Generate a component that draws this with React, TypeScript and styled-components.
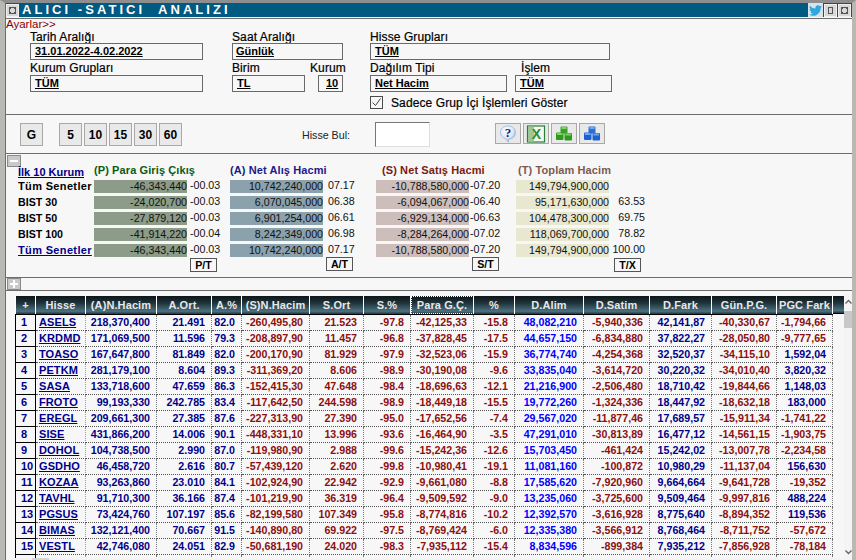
import React from 'react';
import styled, { createGlobalStyle } from 'styled-components';
import { FaTwitter } from 'react-icons/fa';

const Global = createGlobalStyle`
  html, body { margin: 0; padding: 0; background: #f7f7f7; }
  body { width: 856px; height: 560px; overflow: hidden; font-family: "Liberation Sans", Arial, sans-serif; font-size: 10.667px; color: #000; }
`;

const Frame = styled.div`
  width: 856px; height: 560px; box-sizing: border-box; overflow: hidden;
  background: #f7f7f7; border-top: 3px solid #8e8e8e; border-left: 5px solid #b8b9b3; border-right: 4px solid #b8b9b3;
  display: flex; flex-direction: column;
`;
const Inner = styled.div`
  flex: 1; min-height: 0; border-left: 1px solid #6c6c6c; display: flex; flex-direction: column;
`;
const TitleBar = styled.div`
  height: 14px; flex: none; background: #005a82; display: flex; align-items: center; position: relative;
  border-bottom: 1px solid #f7f7f7; box-sizing: content-box;
`;
const WinBtn = styled.div`
  width: 13px; height: 13px; background: #d8d8d8; border: 1px solid #f0f0f0; box-sizing: border-box;
  display: flex; align-items: center; justify-content: center; flex: none; margin-right: 1px;
`;
const TitleText = styled.div`
  margin-left: 2px; color: #fff; font-weight: bold; font-size: 13px; letter-spacing: 3.05px; white-space: pre; line-height: 14px;
`;
const TitleRight = styled.div`
  margin-left: auto; display: flex; align-items: center;
`;
const TwitterBox = styled.div`
  width: 15px; height: 14px; background: #d9e3ea; display: flex; align-items: center; justify-content: center; color: #32a6dc; margin-right: 1px;
`;
const Section = styled.div<{ $h: number }>`
  height: ${p => p.$h}px; flex: none; border-top: 1px solid #6e6e6e; box-sizing: content-box; position: relative;
`;
const Settings = styled.div`
  height: 95px; flex: none; border-top: 1px solid #6e6e6e;
`;
const AyarLink = styled.div`
  color: #8b0000; font-size: 11.5px; line-height: 11px; height: 10px;
`;
const FormGrid = styled.div`
  display: grid;
  grid-template-columns: 173px 29px 73px 13px 25px 27px 137px 8px 97px;
  grid-template-rows: 14px 17px 15px 17px 4px 13px;
  margin-left: 24px;
`;
const Label = styled.div<{ $col: string; $row: number; $dx?: number }>`
  grid-column: ${p => p.$col}; grid-row: ${p => p.$row};
  font-size: 12px; font-weight: 500; line-height: 17px; height: 14px; white-space: nowrap; padding-left: ${p => p.$dx ?? 0}px; letter-spacing: .1px;
  -webkit-text-stroke: .2px #000;
`;
const Field = styled.div<{ $col: string; $row: number; $pl?: number; $wide?: boolean }>`
  grid-column: ${p => p.$col}; grid-row: ${p => p.$row};
  border: 1px solid #6a6a6a; box-sizing: border-box; height: 17px; padding-left: ${p => p.$pl ?? 4}px;
  font-weight: bold; font-size: 11px; line-height: 14px; text-decoration: underline; white-space: nowrap; overflow: hidden;
  ${p => p.$wide ? 'width: 240px;' : ''}
`;
const CheckRow = styled.div`
  grid-column: 7 / 10; grid-row: 6; display: flex; align-items: center; gap: 8px; white-space: nowrap;
  font-weight: 500; font-size: 12px; letter-spacing: .1px; -webkit-text-stroke: .2px #000;
`;
const CheckBox = styled.div`
  width: 13px; height: 13px; border: 1px solid #4a4a4a; box-sizing: border-box; background: #f7f7f7; display: flex; align-items: center; justify-content: center; flex: none;
`;
const Toolbar = styled.div`
  flex: none; border-top: 1px solid #6e6e6e; display: flex; align-items: flex-start; padding: 8px 0 0 14px; box-sizing: content-box; height: 30px;
`;
const PeriodBtn = styled.div<{ $ml?: number }>`
  width: 23px; height: 23px; box-sizing: border-box; background: #e9e9e9; border: 1px solid #a8a8a8; margin-left: ${p => p.$ml ?? 0}px; margin-right: 2px;
  display: flex; align-items: center; justify-content: center; font-weight: bold; font-size: 12px; flex: none;
`;
const FindLabel = styled.div`
  margin-left: 118px; width: 73px; line-height: 24px; font-size: 10.667px; color: #222; flex: none;
`;
const FindInput = styled.div`
  width: 55px; height: 25px; margin-top: -1px; box-sizing: border-box; background: #fff; border: 1px solid #777; border-right-color: #ddd; border-bottom-color: #ddd; flex: none;
`;
const IconBtn = styled.div<{ $ml?: number }>`
  width: 26px; height: 21px; box-sizing: border-box; background: #e9e9e9; border: 1px solid #a8a8a8; margin-left: ${p => p.$ml ?? 0}px; margin-right: 2px;
  display: flex; align-items: center; justify-content: center; flex: none;
`;
const Summary = styled.div`
  height: 123px; flex: none; border-top: 1px solid #6e6e6e; position: relative; display: flex; flex-direction: column;
`;
const Toggle = styled.div<{ $mt: number }>`
  width: 14px; height: 12px; margin: ${p => p.$mt}px 0 0 1px; background: #c9c9c9; border: 1px solid #8a8a8a; box-sizing: border-box;
  display: flex; align-items: center; justify-content: center; color: #fff; flex: none;
`;
const SumHead = styled.div`
  display: flex; height: 14px; margin-top: -4px; margin-bottom: 3px; align-items: center; white-space: nowrap;
`;
const SumHeadLink = styled.div`
  margin-left: 12px; width: 76px; color: #00008b; font-weight: bold; font-size: 11px; text-decoration: underline; line-height: 14px; padding-top: 4px; height: 14px;
`;
const SumTitle = styled.div<{ $c: string; $w: number }>`
  width: ${p => p.$w}px; color: ${p => p.$c}; font-size: 11px; font-weight: bold; line-height: 14px; flex: none; letter-spacing: .1px;
`;
const SumRow = styled.div`
  display: flex; height: 13px; margin-bottom: 3px; align-items: stretch; white-space: nowrap; line-height: 13px;
`;
const SumName = styled.div<{ $link?: boolean; $wide?: boolean }>`
  margin-left: 12px; width: 76px; flex: none; font-weight: bold; font-size: ${p => p.$wide ? '11px' : '10.667px'}; letter-spacing: ${p => p.$wide ? '.35px' : '0'};
  color: ${p => p.$link ? '#00008b' : '#000'}; text-decoration: ${p => p.$link ? 'underline' : 'none'};
`;
const Bar = styled.div<{ $bg: string }>`
  width: 93px; background: ${p => p.$bg}; text-align: right; flex: none; font-size: 10.667px; color: #111;
`;
const Pct = styled.div<{ $w: number; $pl?: number; $align?: string }>`
  width: ${p => p.$w}px; flex: none; padding-left: ${p => p.$pl ?? 0}px; box-sizing: border-box; font-size: 10.667px; color: #111; text-align: ${p => p.$align ?? 'left'}; margin-top: -1px;
`;
const TotalTag = styled.div<{ $x: number; $y: number }>`
  position: absolute; left: ${p => p.$x}px; top: ${p => p.$y}px; width: 27px; height: 14px; box-sizing: border-box; border: 1px solid #555; font-weight: bold; font-size: 10.667px;
  display: flex; align-items: center; justify-content: center; background: #f7f7f7;
`;
const TableWrap = styled.div`
  flex: 1; min-height: 0; border-top: 1px solid #6e6e6e; display: flex; padding: 5px 0 0 9px; position: relative; overflow: hidden;
`;
const Table = styled.table`
  border-collapse: collapse; table-layout: fixed; width: 817px; flex: none; align-self: flex-start; white-space: nowrap;
`;
const headGradient = 'linear-gradient(#0c1519 0%, #1f343b 40%, #4c7180 85%, #22363e 100%)';
const Th = styled.th<{ $focus?: boolean }>`
  height: 18px; padding: 0; box-sizing: border-box; color: #e8e8e8; font-size: 11px; font-weight: bold; letter-spacing: .1px; text-align: center;
  background: ${headGradient};
  border-right: 1px solid #fff; border-left: 1px solid #fff; border-bottom: 1px solid #000; overflow: hidden;
  ${p => p.$focus ? 'outline: 1px dotted #fff; outline-offset: -1px;' : ''}
`;
const Td = styled.td<{ $c?: string }>`
  height: 16px; padding: 0 6px 0 0; box-sizing: border-box; text-align: right; font-weight: bold; font-size: 10.667px;
  color: ${p => p.$c ?? '#00008b'}; border-bottom: 1px dotted #555; border-right: 1px dotted #777; overflow: hidden; line-height: 14px;
`;
const NumCell = styled.td`
  height: 16px; padding: 0 0 0 5px; box-sizing: border-box; text-align: left; font-weight: bold; font-size: 11px; color: #00008b;
  border: 1px solid #000; border-top: 0;
`;
const StockCell = styled.td`
  height: 16px; padding: 0 0 0 3px; box-sizing: border-box; text-align: left; font-weight: bold; font-size: 11px; color: #00008b; text-decoration: underline; letter-spacing: .1px;
  border-bottom: 1px dotted #555; border-right: 1px dotted #6aa5d8; overflow: hidden;
`;
const HeadFill = styled.div`
  width: 11px; height: 18px; flex: none; background: ${headGradient}; border-bottom: 1px solid #000; box-sizing: border-box;
`;
const Scrollbar = styled.div`
  width: 9px; flex: none; display: flex; flex-direction: column; align-items: center; position: relative; margin-top: -2px; background: #f4f4f4;
`;
const ScrollThumb = styled.div`
  width: 9px; height: 17px; background: #c8c8c8; margin-top: 7px;
`;
const ScrollUp = styled.svg`
  margin-top: 5px; flex: none;
`;
const ScrollDown = styled.svg`
  margin-top: auto; margin-bottom: 5px; flex: none;
`;
const HScroll = styled.div`
  position: absolute; left: 9px; right: 9px; bottom: 0; height: 2px; background: #f4f4f4; padding-left: 17px;
`;
const HThumb = styled.div`
  width: 17px; height: 2px; background: #d4d4d4;
`;

const rows: string[][] = [
['ASELS','218,370,400','21.491','82.0','-260,495,80','21.523','-97.8','-42,125,33','-15.8','48,082,210','-5,940,336','42,141,87','-40,330,67','-1,794,66'],
['KRDMD','171,069,500','11.596','79.3','-208,897,90','11.457','-96.8','-37,828,45','-17.5','44,657,150','-6,834,880','37,822,27','-28,050,80','-9,777,65'],
['TOASO','167,647,800','81.849','82.0','-200,170,90','81.929','-97.9','-32,523,06','-15.9','36,774,740','-4,254,368','32,520,37','-34,115,10','1,592,04'],
['PETKM','281,179,100','8.604','89.3','-311,369,20','8.606','-98.9','-30,190,08','-9.6','33,835,040','-3,614,720','30,220,32','-34,010,40','3,820,32'],
['SASA','133,718,600','47.659','86.3','-152,415,30','47.648','-98.4','-18,696,63','-12.1','21,216,900','-2,506,480','18,710,42','-19,844,66','1,148,03'],
['FROTO','99,193,330','242.785','83.4','-117,642,50','244.598','-98.9','-18,449,18','-15.5','19,772,260','-1,324,336','18,447,92','-18,632,18','183,000'],
['EREGL','209,661,300','27.385','87.6','-227,313,90','27.390','-95.0','-17,652,56','-7.4','29,567,020','-11,877,46','17,689,57','-15,911,34','-1,741,22'],
['SISE','431,866,200','14.006','90.1','-448,331,10','13.996','-93.6','-16,464,90','-3.5','47,291,010','-30,813,89','16,477,12','-14,561,15','-1,903,75'],
['DOHOL','104,738,500','2.990','87.0','-119,980,90','2.988','-99.6','-15,242,36','-12.6','15,703,450','-461,424','15,242,02','-13,007,78','-2,234,58'],
['GSDHO','46,458,720','2.616','80.7','-57,439,120','2.620','-99.8','-10,980,41','-19.1','11,081,160','-100,872','10,980,29','-11,137,04','156,630'],
['KOZAA','93,263,860','23.010','84.1','-102,924,90','22.942','-92.9','-9,661,080','-8.8','17,585,620','-7,920,960','9,664,664','-9,641,728','-19,352'],
['TAVHL','91,710,300','36.166','87.4','-101,219,90','36.319','-96.4','-9,509,592','-9.0','13,235,060','-3,725,600','9,509,464','-9,997,816','488,224'],
['PGSUS','73,424,760','107.197','85.6','-82,199,580','107.349','-95.8','-8,774,816','-10.2','12,392,570','-3,616,928','8,775,640','-8,894,352','119,536'],
['BIMAS','132,121,400','70.667','91.5','-140,890,80','69.922','-97.5','-8,769,424','-6.0','12,335,380','-3,566,912','8,768,464','-8,711,752','-57,672'],
['VESTL','42,746,080','24.051','82.9','-50,681,190','24.020','-98.3','-7,935,112','-15.4','8,834,596','-899,384','7,935,212','-7,856,928','-78,184'],
['','','','','','','','','','','','','',''],
];
const heads = ['+','Hisse','(A)N.Hacim','A.Ort.','A.%','(S)N.Hacim','S.Ort','S.%','Para G.Ç.','%','D.Alim','D.Satim','D.Fark','Gün.P.G.','PGC Fark'];
const widths = [20,50,71,55,30,68,54,47,63,41,69,66,62,65,56];
const RED = '#8b1010', NAVY = '#00008b', BLUE = '#0000ff';
const colColor = (i: number, v: string) => {
  if (i <= 2) return NAVY;
  if (i === 8) return BLUE;
  if (i === 10) return NAVY;
  if (i === 12) return v.startsWith('-') ? RED : NAVY;
  return RED;
};
const summary = [
  ['Tüm Senetler','-46,343,440','-00.03','10,742,240,000','07.17','-10,788,580,000','-07.20','149,794,900,000',''],
  ['BIST 30','-24,020,700','-00.03','6,070,045,000','06.38','-6,094,067,000','-06.40','95,171,630,000','63.53'],
  ['BIST 50','-27,879,120','-00.03','6,901,254,000','06.61','-6,929,134,000','-06.63','104,478,300,000','69.75'],
  ['BIST 100','-41,914,220','-00.04','8,242,349,000','06.98','-8,284,264,000','-07.02','118,069,700,000','78.82'],
  ['Tüm Senetler','-46,343,440','-00.03','10,742,240,000','07.17','-10,788,580,000','-07.20','149,794,900,000','100.00'],
];

const Close = () => (
  <svg width="9" height="9" viewBox="0 0 9 9" fill="none" stroke="#555" strokeWidth="1"><rect x="1.5" y="1.5" width="6" height="6"/><path d="M1 1l2 2M8 1L6 3M1 8l2-2M8 8L6 6"/></svg>
);
const Help = () => (
  <svg width="18" height="18" viewBox="0 0 18 18"><defs><radialGradient id="hb" cx=".4" cy=".3" r=".75"><stop offset="0" stopColor="#fff"/><stop offset=".6" stopColor="#dce8f8"/><stop offset="1" stopColor="#7ea6e0"/></radialGradient></defs><path d="M9 1c4.4 0 7.5 2.8 7.5 6.5S13.4 14 9.8 14l-.3 3.2L6.4 13.6C3.4 12.8 1.5 10.5 1.5 7.5 1.5 3.8 4.6 1 9 1z" fill="url(#hb)" stroke="#8fabd4" strokeWidth=".7"/><text x="9" y="12" textAnchor="middle" fontFamily="Liberation Serif" fontWeight="bold" fontSize="13" fill="#14277f">?</text></svg>
);
const Excel = () => (
  <svg width="20" height="18" viewBox="0 0 20 18"><rect x="1.5" y="1" width="17" height="16" fill="#f4f8ee" stroke="#2d7d3a" strokeWidth="1.2"/><rect x="2" y="1.6" width="6" height="15" fill="#9ec795"/><text x="10.5" y="14" textAnchor="middle" fontFamily="Liberation Sans" fontWeight="bold" fontSize="14" fill="#2c8a35">X</text></svg>
);
const Cubes = ({ a, b, c }: { a: string; b: string; c: string }) => (
  <svg width="16" height="15" viewBox="0 0 16 15">
    <rect x="4.5" y="0.5" width="7" height="7" rx="1" fill={a}/><rect x="5.5" y="1" width="5" height="2" fill={c}/>
    <rect x="0" y="6.5" width="7.5" height="7.5" rx="1" fill={b}/><rect x="1" y="7" width="5.5" height="2" fill={c}/>
    <rect x="8.5" y="7" width="7.5" height="7.5" rx="1" fill={b}/><rect x="9.5" y="7.5" width="5.5" height="2" fill={c}/>
  </svg>
);

export default function App() {
  return (
    <>
      <Global />
      <Frame>
        <Inner>
          <TitleBar>
            <WinBtn><Close /></WinBtn>
            <TitleText>ALICI -SATICI  ANALIZI</TitleText>
            <TitleRight>
              <TwitterBox><FaTwitter size={13} /></TwitterBox>
              <WinBtn><svg width="7" height="9" viewBox="0 0 7 9" fill="none" stroke="#555"><rect x="1.5" y="1.5" width="4" height="6"/></svg></WinBtn>
              <WinBtn><Close /></WinBtn>
            </TitleRight>
          </TitleBar>
          <Settings>
            <AyarLink>Ayarlar&gt;&gt;</AyarLink>
            <FormGrid>
              <Label $col="1" $row={1}>Tarih Aralığı</Label>
              <Field $col="1" $row={2}>31.01.2022-4.02.2022</Field>
              <Label $col="3 / 6" $row={1}>Saat Aralığı</Label>
              <Field $col="3 / 6" $row={2} $pl={3}>Günlük</Field>
              <Label $col="7 / 10" $row={1}>Hisse Grupları</Label>
              <Field $col="7 / 9" $row={2} $wide>TÜM</Field>
              <Label $col="1" $row={3}>Kurum Grupları</Label>
              <Field $col="1" $row={4}>TÜM</Field>
              <Label $col="3" $row={3}>Birim</Label>
              <Field $col="3" $row={4}>TL</Field>
              <Label $col="4 / 7" $row={3} $dx={5}>Kurum</Label>
              <Field $col="5" $row={4} $pl={7}>10</Field>
              <Label $col="7" $row={3}>Dağılım Tipi</Label>
              <Field $col="7" $row={4}>Net Hacim</Field>
              <Label $col="9" $row={3} $dx={6}>İşlem</Label>
              <Field $col="9" $row={4}>TÜM</Field>
              <CheckRow>
                <CheckBox><svg width="11" height="11" viewBox="0 0 11 11" fill="none" stroke="#444" strokeWidth="1"><path d="M1.5 5.5l3 3 5-7"/></svg></CheckBox>
                Sadece Grup İçi İşlemleri Göster
              </CheckRow>
            </FormGrid>
          </Settings>
          <Toolbar>
            <PeriodBtn>G</PeriodBtn>
            <PeriodBtn $ml={14}>5</PeriodBtn>
            <PeriodBtn>10</PeriodBtn>
            <PeriodBtn>15</PeriodBtn>
            <PeriodBtn>30</PeriodBtn>
            <PeriodBtn>60</PeriodBtn>
            <FindLabel>Hisse Bul:</FindLabel>
            <FindInput />
            <IconBtn $ml={65}><Help /></IconBtn>
            <IconBtn><Excel /></IconBtn>
            <IconBtn><Cubes a="#3aa02a" b="#2d9a1e" c="#7fd35e" /></IconBtn>
            <IconBtn><Cubes a="#2a6fd8" b="#1d62cf" c="#6fa8ee" /></IconBtn>
          </Toolbar>
          <Summary>
            <Toggle $mt={1}><svg width="8" height="4" viewBox="0 0 8 4"><rect y="1" width="8" height="2" fill="#fff"/></svg></Toggle>
            <SumHead>
              <SumHeadLink>İlk 10 Kurum</SumHeadLink>
              <SumTitle $c="#0b5a14" $w={136}>(P) Para Giriş Çıkış</SumTitle>
              <SumTitle $c="#1a1a8a" $w={152}>(A) Net Alış Hacmi</SumTitle>
              <SumTitle $c="#7a1a12" $w={136}>(S) Net Satış Hacmi</SumTitle>
              <SumTitle $c="#7c5a50" $w={120}>(T) Toplam Hacim</SumTitle>
            </SumHead>
            {summary.map((r, i) => (
              <SumRow key={i}>
                <SumName $link={i === 4} $wide={i === 0 || i === 4}>{r[0]}</SumName>
                <Bar $bg="#8c9c88">{r[1]}</Bar>
                <Pct $w={43} $pl={3}>{r[2]}</Pct>
                <Bar $bg="#8ba1ac">{r[3]}</Bar>
                <Pct $w={53} $pl={5}>{r[4]}</Pct>
                <Bar $bg="#cdbebc">{r[5]}</Bar>
                <Pct $w={47} $pl={1}>{r[6]}</Pct>
                <Bar $bg="#e8e8d0">{r[7]}</Bar>
                <Pct $w={36} $align="right">{r[8]}</Pct>
              </SumRow>
            ))}
            <TotalTag $x={184} $y={104}>P/T</TotalTag>
            <TotalTag $x={320} $y={103}>A/T</TotalTag>
            <TotalTag $x={466} $y={103}>S/T</TotalTag>
            <TotalTag $x={608} $y={104}>T/X</TotalTag>
          </Summary>
          <Section $h={12}>
            <Toggle $mt={0}><svg width="8" height="8" viewBox="0 0 8 8"><path d="M3 0h2v3h3v2H5v3H3V5H0V3h3z" fill="#fff"/></svg></Toggle>
          </Section>
          <TableWrap>
            <Table>
              <colgroup>{widths.map((w, i) => <col key={i} style={{ width: w }} />)}</colgroup>
              <thead>
                <tr>{heads.map((h, i) => <Th key={i} $focus={i === 8}>{h}</Th>)}</tr>
              </thead>
              <tbody>
                {rows.map((r, ri) => (
                  <tr key={ri}>
                    <NumCell>{r[0] ? ri + 1 : ''}</NumCell>
                    <StockCell>{r[0]}</StockCell>
                    {r.slice(1).map((v, ci) => <Td key={ci} $c={colColor(ci, v)}>{v}</Td>)}
                  </tr>
                ))}
              </tbody>
            </Table>
            <HeadFill />
            <Scrollbar>
              <ScrollUp width="7" height="5" viewBox="0 0 7 5" fill="none" stroke="#666" strokeWidth="1.4"><path d="M.5 4.5l3-3 3 3"/></ScrollUp>
              <ScrollThumb />
              <ScrollDown width="7" height="5" viewBox="0 0 7 5" fill="none" stroke="#666" strokeWidth="1.4"><path d="M.5.5l3 3 3-3"/></ScrollDown>
            </Scrollbar>
            <HScroll><HThumb /></HScroll>
          </TableWrap>
        </Inner>
      </Frame>
    </>
  );
}
